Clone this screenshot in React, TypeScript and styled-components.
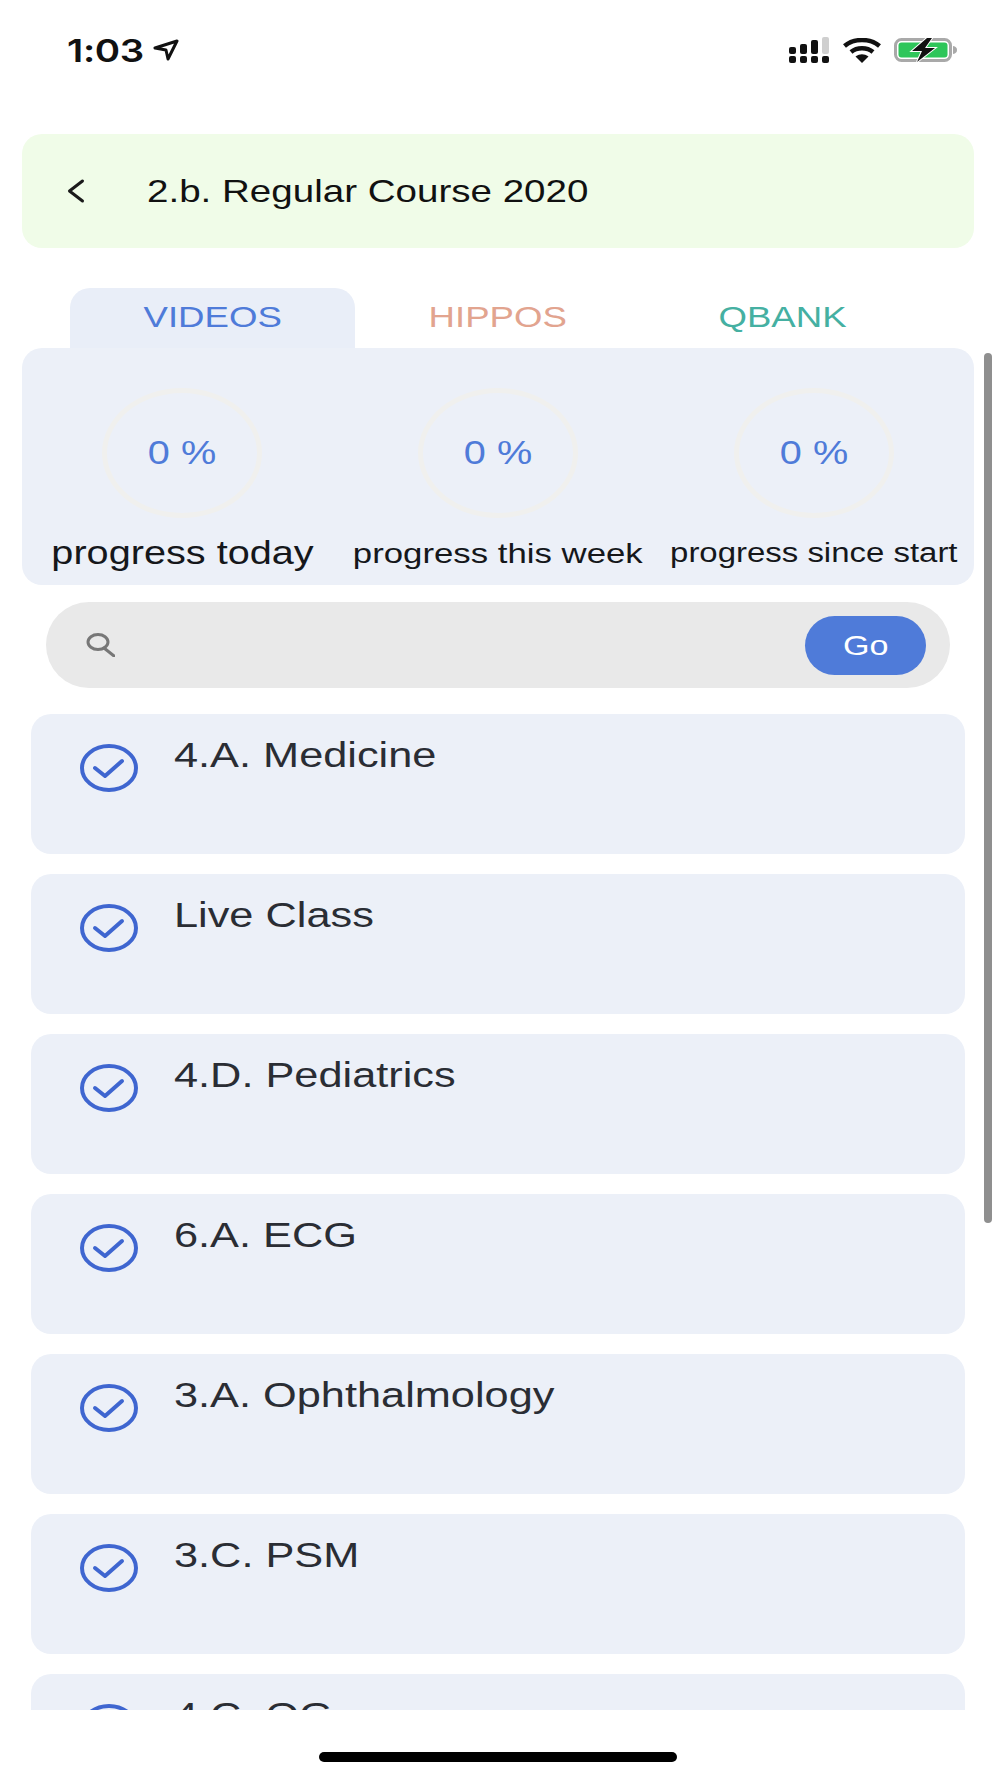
import React from "react";
import styled, { createGlobalStyle } from "styled-components";

const SCALE_X = 1.22;

const GlobalStyle = createGlobalStyle`
  html, body {
    margin: 0;
    padding: 0;
    background: #fff;
  }
  body {
    font-family: "Liberation Sans", Arial, sans-serif;
  }
`;

const Page = styled.div`
  width: 1000px;
  height: 1778px;
  display: flex;
  flex-direction: column;
  overflow: hidden;
  background: #fff;
`;

// the screenshot is stretched sideways, so the glyphs have to be as well
const Wide = styled.span<{ $origin?: string }>`
  display: inline-block;
  white-space: nowrap;
  transform: scaleX(${SCALE_X});
  transform-origin: ${(p) => p.$origin ?? "center"} center;
`;

const StatusBar = styled.div`
  height: 134px;
  flex: none;
  box-sizing: border-box;
  padding: 32px 42px 0 67px;
  display: flex;
  justify-content: space-between;
  align-items: flex-start;
`;

const TimeBlock = styled.div`
  display: flex;
  align-items: center;
  gap: 11px;
  height: 36px;
`;

const Time = styled.div`
  width: 75px;
  font-family: Inter, "Liberation Sans", sans-serif;
  font-size: 31.5px;
  font-weight: 600;
  letter-spacing: -0.3px;
  color: #111;
`;

const StatusIcons = styled.div`
  display: flex;
  align-items: center;
  gap: 13px;
  height: 36px;
`;

const Header = styled.div`
  height: 114px;
  flex: none;
  margin: 0 26px 0 22px;
  padding-left: 45px;
  display: flex;
  align-items: center;
  background: #f0fce8;
  border-radius: 20px;
`;

const HeaderTitle = styled.div`
  margin-left: 60px;
  font-size: 31.6px;
  color: #111;
`;

const Tabs = styled.div`
  flex: none;
  margin-top: 40px;
  padding-left: 70px;
  height: 60px;
  display: flex;
`;

const Tab = styled.div<{ $active?: boolean; $color: string }>`
  width: 285px;
  display: flex;
  align-items: center;
  justify-content: center;
  padding-bottom: 2px;
  box-sizing: border-box;
  font-size: 30px;
  color: ${(p) => p.$color};
  background: ${(p) => (p.$active ? "#e9eef8" : "transparent")};
  border-radius: 20px 20px 0 0;
`;

const Viewport = styled.div`
  position: relative;
  flex: none;
  height: 1362px;
  overflow: hidden;
`;

const Scrollbar = styled.div`
  position: absolute;
  top: 5px;
  left: 984px;
  width: 8px;
  height: 870px;
  border-radius: 4px;
  background: #8f8f8f;
`;

const StatsPanel = styled.div`
  height: 237px;
  margin: 0 26px 0 22px;
  box-sizing: border-box;
  padding: 40px 2px 0;
  display: grid;
  grid-template-columns: repeat(3, 1fr);
  background: #ecf0f8;
  border-radius: 20px;
`;

const Stat = styled.div`
  display: flex;
  flex-direction: column;
  align-items: center;
  gap: 15px;
`;

const Ring = styled.div`
  width: 160px;
  height: 130px;
  box-sizing: border-box;
  display: flex;
  align-items: center;
  justify-content: center;
  padding-top: 1px;
  border: 5px solid #f0f0ee;
  border-radius: 50%;
  color: #4f7bd9;
  font-size: 32.5px;
`;

const StatLabel = styled.div<{ $size: number }>`
  height: 40px;
  display: flex;
  align-items: center;
  font-size: ${(p) => p.$size}px;
  color: #15171b;
`;

const SearchBar = styled.div`
  height: 86px;
  margin: 17px 50px 0 46px;
  box-sizing: border-box;
  padding: 0 24px 0 40px;
  display: flex;
  align-items: center;
  justify-content: space-between;
  background: #e9e9e9;
  border-radius: 43px;
`;

const GoButton = styled.div`
  width: 121px;
  height: 59px;
  box-sizing: border-box;
  padding-top: 2px;
  display: flex;
  align-items: center;
  justify-content: center;
  background: #4f7bd9;
  border-radius: 30px;
  color: #fff;
  font-size: 28px;
`;

const List = styled.div`
  margin: 26px 35px 0 31px;
  display: flex;
  flex-direction: column;
  gap: 20px;
`;

const Card = styled.div`
  height: 140px;
  flex: none;
  box-sizing: border-box;
  padding: 30px 0 0 49px;
  display: flex;
  align-items: flex-start;
  gap: 36px;
  background: #ecf0f8;
  border-radius: 20px;
`;

const CardTitle = styled.div`
  margin-top: -9px;
  font-size: 35.5px;
  color: #2a2d34;
`;

const HomeArea = styled.div`
  flex: 1;
  display: flex;
  justify-content: center;
  padding: 42px 4px 0 0;
`;

const HomeIndicator = styled.div`
  width: 358px;
  height: 10px;
  background: #000;
  border-radius: 5px;
`;

const LocationArrow = () => (
  <svg width="26" height="22" viewBox="0 0 26 22" fill="none">
    <path d="M24 2 L2 9 L13 11 L15 20 Z" stroke="#111" strokeWidth="3" strokeLinejoin="round" />
  </svg>
);

const SignalIcon = () => (
  <svg width="41" height="26" viewBox="0 0 41 26" fill="#111">
    <rect x="0" y="10" width="7" height="7" rx="2" />
    <rect x="11" y="7" width="7" height="10" rx="2" />
    <rect x="22" y="3" width="7" height="14" rx="2" />
    <rect x="33" y="0" width="7" height="17" rx="2" fill="#cfcfcf" />
    <rect x="0" y="19" width="7" height="7" rx="2" />
    <rect x="11" y="19" width="7" height="7" rx="2" />
    <rect x="22" y="19" width="7" height="7" rx="2" />
    <rect x="33" y="19" width="7" height="7" rx="2" />
  </svg>
);

const WifiIcon = () => (
  <svg width="38" height="25" viewBox="0 0 38 25" fill="none" stroke="#111" strokeWidth="4.5">
    <path d="M1.5 8 C11 0 27 0 36.5 8" />
    <path d="M8 14 C14 9 24 9 30 14" />
    <path d="M12.5 18.5 L19 25 L25.5 18.5 C21 15.5 17 15.5 12.5 18.5 Z" fill="#111" stroke="none" />
  </svg>
);

const BatteryIcon = () => (
  <svg width="64" height="26" viewBox="0 0 64 26" fill="none">
    <rect x="1.5" y="2.5" width="55" height="21" rx="6" stroke="#a9a9a9" strokeWidth="3" />
    <rect x="4.5" y="5.5" width="49" height="15" rx="3" fill="#2ec65a" />
    <path d="M59 9 C62 9.5 63 11 63 13 C63 15 62 16.5 59 17 Z" fill="#a9a9a9" />
    <path
      d="M33 1 L18 14 L28 14 L23 25 L41 11 L31 11 L38 1 Z"
      fill="#111"
      stroke="#fff"
      strokeWidth="2"
      paintOrder="stroke"
    />
  </svg>
);

const BackChevron = () => (
  <svg width="20" height="26" viewBox="0 0 20 26" fill="none" style={{ flex: "none" }}>
    <path d="M15.5 3 L2.5 13 L15.5 23" stroke="#1a1a1a" strokeWidth="3" strokeLinecap="round" strokeLinejoin="round" />
  </svg>
);

const SearchIcon = () => (
  <svg width="29" height="24" viewBox="0 0 29 24" fill="none" stroke="#777" strokeWidth="3">
    <ellipse cx="12" cy="9" rx="10" ry="7.5" />
    <path d="M18 15 L28 23" strokeLinecap="round" />
  </svg>
);

const CheckCircle = () => (
  <svg width="58" height="48" viewBox="0 0 58 48" fill="none" stroke="#3f66d0" strokeWidth="4" style={{ flex: "none" }}>
    <ellipse cx="29" cy="24" rx="27" ry="22" />
    <path d="M15 24 L25 32 L42 17" strokeLinecap="round" strokeLinejoin="round" />
  </svg>
);

const stats = [
  { label: "progress today", size: 32.5 },
  { label: "progress this week", size: 28.5 },
  { label: "progress since start", size: 27 },
];

const topics = [
  "4.A. Medicine",
  "Live Class",
  "4.D. Pediatrics",
  "6.A. ECG",
  "3.A. Ophthalmology",
  "3.C. PSM",
  "4.C. OG",
];

const App = () => (
  <Page>
    <GlobalStyle />
    <StatusBar>
      <TimeBlock>
        <Time>
          <Wide $origin="left">1:03</Wide>
        </Time>
        <LocationArrow />
      </TimeBlock>
      <StatusIcons>
        <SignalIcon />
        <WifiIcon />
        <BatteryIcon />
      </StatusIcons>
    </StatusBar>

    <Header>
      <BackChevron />
      <HeaderTitle>
        <Wide $origin="left">2.b. Regular Course 2020</Wide>
      </HeaderTitle>
    </Header>

    <Tabs>
      <Tab $active $color="#4f7bd9">
        <Wide>VIDEOS</Wide>
      </Tab>
      <Tab $color="#e2a48f">
        <Wide>HIPPOS</Wide>
      </Tab>
      <Tab $color="#45b0a2">
        <Wide>QBANK</Wide>
      </Tab>
    </Tabs>

    <Viewport>
      <StatsPanel>
        {stats.map((s) => (
          <Stat key={s.label}>
            <Ring>
              <Wide>0 %</Wide>
            </Ring>
            <StatLabel $size={s.size}>
              <Wide>{s.label}</Wide>
            </StatLabel>
          </Stat>
        ))}
      </StatsPanel>

      <SearchBar>
        <SearchIcon />
        <GoButton>
          <Wide>Go</Wide>
        </GoButton>
      </SearchBar>

      <List>
        {topics.map((t) => (
          <Card key={t}>
            <CheckCircle />
            <CardTitle>
              <Wide $origin="left">{t}</Wide>
            </CardTitle>
          </Card>
        ))}
      </List>

      <Scrollbar />
    </Viewport>

    <HomeArea>
      <HomeIndicator />
    </HomeArea>
  </Page>
);

export default App;
